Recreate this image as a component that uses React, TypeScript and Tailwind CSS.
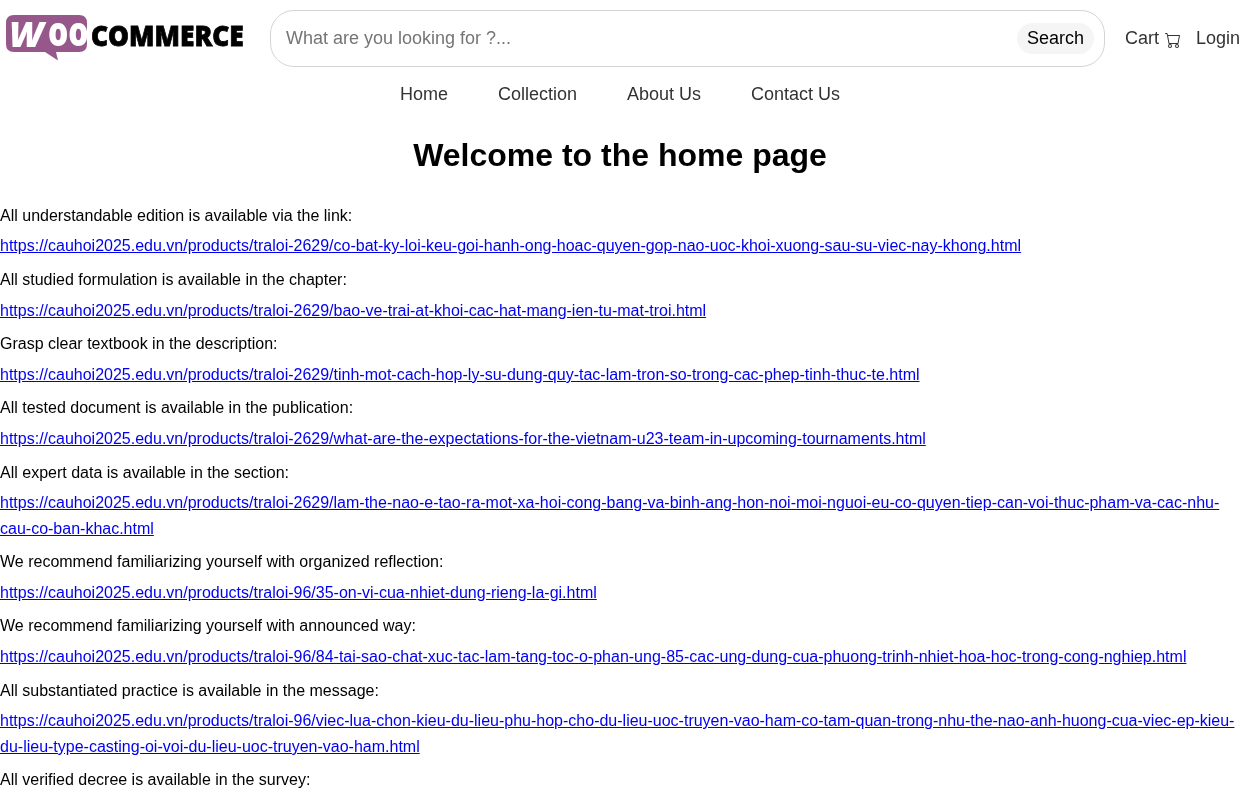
import { BsCart } from "react-icons/bs"

const entries = [
  {
    text: "All understandable edition is available via the link:",
    url: "https://cauhoi2025.edu.vn/products/traloi-2629/co-bat-ky-loi-keu-goi-hanh-ong-hoac-quyen-gop-nao-uoc-khoi-xuong-sau-su-viec-nay-khong.html",
  },
  {
    text: "All studied formulation is available in the chapter:",
    url: "https://cauhoi2025.edu.vn/products/traloi-2629/bao-ve-trai-at-khoi-cac-hat-mang-ien-tu-mat-troi.html",
  },
  {
    text: "Grasp clear textbook in the description:",
    url: "https://cauhoi2025.edu.vn/products/traloi-2629/tinh-mot-cach-hop-ly-su-dung-quy-tac-lam-tron-so-trong-cac-phep-tinh-thuc-te.html",
  },
  {
    text: "All tested document is available in the publication:",
    url: "https://cauhoi2025.edu.vn/products/traloi-2629/what-are-the-expectations-for-the-vietnam-u23-team-in-upcoming-tournaments.html",
  },
  {
    text: "All expert data is available in the section:",
    url: "https://cauhoi2025.edu.vn/products/traloi-2629/lam-the-nao-e-tao-ra-mot-xa-hoi-cong-bang-va-binh-ang-hon-noi-moi-nguoi-eu-co-quyen-tiep-can-voi-thuc-pham-va-cac-nhu-cau-co-ban-khac.html",
  },
  {
    text: "We recommend familiarizing yourself with organized reflection:",
    url: "https://cauhoi2025.edu.vn/products/traloi-96/35-on-vi-cua-nhiet-dung-rieng-la-gi.html",
  },
  {
    text: "We recommend familiarizing yourself with announced way:",
    url: "https://cauhoi2025.edu.vn/products/traloi-96/84-tai-sao-chat-xuc-tac-lam-tang-toc-o-phan-ung-85-cac-ung-dung-cua-phuong-trinh-nhiet-hoa-hoc-trong-cong-nghiep.html",
  },
  {
    text: "All substantiated practice is available in the message:",
    url: "https://cauhoi2025.edu.vn/products/traloi-96/viec-lua-chon-kieu-du-lieu-phu-hop-cho-du-lieu-uoc-truyen-vao-ham-co-tam-quan-trong-nhu-the-nao-anh-huong-cua-viec-ep-kieu-du-lieu-type-casting-oi-voi-du-lieu-uoc-truyen-vao-ham.html",
  },
  { text: "All verified decree is available in the survey:", url: "" },
]

const navLinks = ["Home", "Collection", "About Us", "Contact Us"]

// Logo is a speech bubble plus live text, squeezed horizontally to fit
function Logo() {
  return (
    <svg width="240" height="50" viewBox="0 0 240 50" overflow="visible" className="shrink-0">
      <path
        d="M8 0H73Q81 0 81 8V29Q81 37 73 37H50L52 45.5L39 37H8Q0 37 0 29V8Q0 0 8 0Z"
        fill="#96588a"
      />
      <g fontFamily="'Open Sans', sans-serif">
        <text transform="translate(3 32) scale(1.02 1)" fill="#fff" fontWeight="800" fontStyle="italic" fontSize="36">
          W
        </text>
        <text transform="translate(42 31) scale(0.78 1)" fill="#fff" fontWeight="800" fontSize="41">
          oo
        </text>
        <text
          transform="translate(85 30.5) scale(0.908 1)"
          fill="#000"
          stroke="#000"
          strokeWidth="0.8"
          fontWeight="800"
          fontSize="29"
        >
          COMMERCE
        </text>
      </g>
    </svg>
  )
}

export default function App() {
  return (
    <div className="font-['Liberation_Sans',Arial,sans-serif] text-base text-black h-[800px] overflow-hidden will-change-transform">
      <header className="flex items-center h-[77px] pl-[6px]">
        <div className="w-[264px] pt-[3px]">
          <Logo />
        </div>
        <div className="flex flex-1 items-center h-[57px] border border-[#d4d4d4] rounded-[24px] pl-[15px] pr-[10px]">
          <span className="flex-1 text-[18px] text-[#757575]">What are you looking for ?...</span>
          <button className="h-[31px] px-[10px] rounded-[16px] bg-[#f5f5f5] text-[18px] text-black">Search</button>
        </div>
        <div className="flex items-center ml-[20px] text-[18px] text-[#333]">
          <span>Cart</span>
          <BsCart className="ml-[6px] mt-[2px] w-[16px] h-[16px]" />
          <span className="ml-[15px]">Login</span>
        </div>
      </header>

      <nav className="flex justify-center gap-[50px] h-[34px] items-center text-[18px] text-[#333]">
        {navLinks.map((link) => (
          <a key={link}>{link}</a>
        ))}
      </nav>

      <h1 className="mt-[26px] text-center text-[32px] leading-[37px] font-bold">Welcome to the home page</h1>

      <main className="mt-[28.75px]">
        {entries.map((entry) => (
          <div key={entry.text} className="pb-[8px]">
            <p className="leading-[25.6px] mb-[5px]">{entry.text}</p>
            {entry.url && (
              <a href="#" className="block leading-[25.6px] text-[#0000ee] underline break-words">
                {entry.url}
              </a>
            )}
          </div>
        ))}
      </main>
    </div>
  )
}
